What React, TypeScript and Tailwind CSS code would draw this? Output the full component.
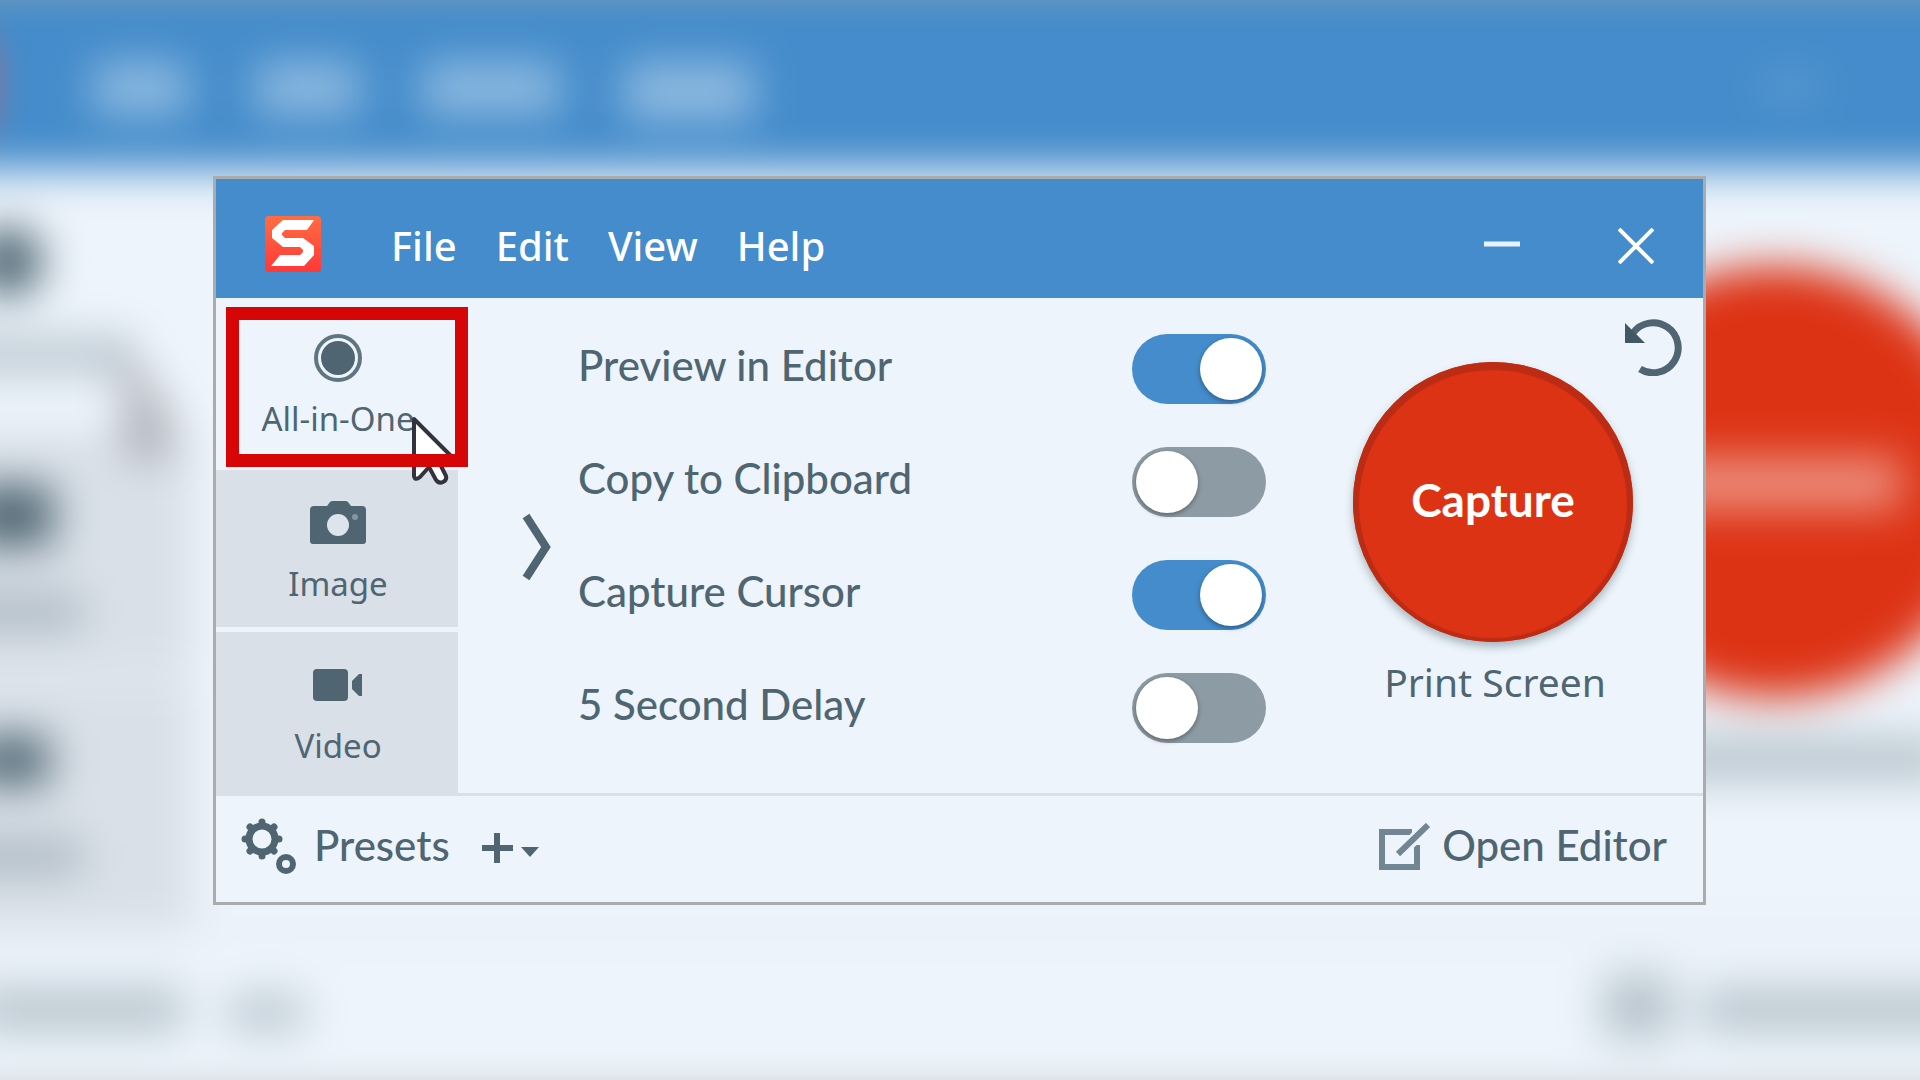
import { ReactNode, useState } from "react";

type Mode = "all" | "image" | "video";

const menus = ["File", "Edit", "View", "Help"];

const defaultOptions = [
  { id: "preview", label: "Preview in Editor", on: true },
  { id: "clipboard", label: "Copy to Clipboard", on: false },
  { id: "cursor", label: "Capture Cursor", on: true },
  { id: "delay", label: "5 Second Delay", on: false },
];

// Out of focus, enlarged copy of the capture window
function Backdrop() {
  return (
    <svg
      aria-hidden="true"
      className="absolute inset-0 h-full w-full"
      viewBox="332 187 1255 706"
      preserveAspectRatio="xMidYMid slice"
    >
      <defs>
        <filter
          id="soft"
          filterUnits="userSpaceOnUse"
          colorInterpolationFilters="sRGB"
          x="150"
          y="100"
          width="1620"
          height="880"
        >
          <feGaussianBlur stdDeviation="14" />
        </filter>
      </defs>
      <g filter="url(#soft)">
        <rect x="100" y="60" width="1720" height="960" fill="#edf4fb" />
        <rect x="100" y="160" width="1720" height="138" fill="#448ccb" />
        <rect x="100" y="60" width="1720" height="118" fill="#a9a9a9" />
        <rect x="100" y="904" width="1720" height="120" fill="#a4a6a8" />
        <rect x="265" y="214" width="55" height="56" fill="#ff5238" />
        <g fill="#ffffff" fillOpacity="0.4">
          <rect x="393" y="228" width="62" height="34" />
          <rect x="499" y="228" width="68" height="34" />
          <rect x="608" y="228" width="90" height="34" />
          <rect x="740" y="228" width="85" height="38" />
          <rect x="1485" y="241" width="35" height="6" />
        </g>
        <rect x="216" y="470" width="242" height="157" fill="#d9e0e8" />
        <rect x="216" y="632" width="242" height="164" fill="#d9e0e8" />
        <rect x="216" y="793" width="1490" height="3" fill="#d9e0e8" />
        <g fill="#4f6672">
          <circle cx="337" cy="358" r="23" />
          <rect x="311" y="504" width="56" height="40" />
          <rect x="314" y="668" width="50" height="32" />
        </g>
        <g fill="#4f6672" fillOpacity="0.34">
          <rect x="258" y="408" width="159" height="22" />
          <rect x="293" y="576" width="93" height="22" />
          <rect x="293" y="736" width="93" height="22" />
          <rect x="316" y="833" width="136" height="28" />
          <rect x="481" y="838" width="50" height="22" />
          <rect x="1386" y="669" width="219" height="28" />
          <rect x="1380" y="824" width="46" height="42" />
          <rect x="1444" y="833" width="222" height="28" />
        </g>
        <path d="M410 410l34 46-2 30h-28z" fill="#5a5560" fillOpacity="0.4" />
        <circle cx="1492" cy="502" r="141" fill="#dd3315" />
        <rect x="1411" y="486" width="164" height="34" fill="#ffffff" fillOpacity="0.45" />
      </g>
    </svg>
  );
}

function AppLogo() {
  return (
    <svg className="h-14 w-14" viewBox="0 0 56 56" aria-hidden="true">
      <defs>
        <linearGradient id="logo" x1="0" y1="0" x2="0" y2="1">
          <stop offset="0" stopColor="#ff6d42" />
          <stop offset="1" stopColor="#ff3838" />
        </linearGradient>
      </defs>
      <rect width="56" height="56" rx="4" fill="url(#logo)" />
      <path
        d="M49 4H18L7 14v8l11 9h17l3 3v2l-3 3H15L6 50h33l10-11v-9l-11-8H20l-3-3v-2l3-3h22z"
        fill="#fff"
      />
    </svg>
  );
}

function RecordIcon() {
  return (
    <svg className="h-[50px] w-[50px]" viewBox="0 0 50 50" aria-hidden="true">
      <circle cx="25" cy="25" r="22" fill="none" stroke="#5f7580" strokeWidth="4" />
      <circle cx="25" cy="25" r="17" fill="#4f6672" />
    </svg>
  );
}

function CameraIcon() {
  return (
    <svg className="h-[50px] w-14" viewBox="0 0 56 50" aria-hidden="true">
      <path
        d="M4 8h13l3-4q1-1 3-1h12q2 0 3 1l3 4h11q4 0 4 4v31q0 3-3 3H3q-3 0-3-3V12q0-4 4-4z"
        fill="#4f6672"
      />
      <circle cx="28" cy="27" r="11" fill="#dde4ec" />
      <circle cx="45" cy="19" r="3" fill="#8496a1" />
    </svg>
  );
}

function VideoIcon() {
  return (
    <svg className="h-[50px] w-[52px]" viewBox="0 0 52 50" aria-hidden="true">
      <rect x="1" y="9" width="35" height="32" rx="4" fill="#4f6672" />
      <path d="M50 14v22h-3l-7-7v-8l7-7z" fill="#4f6672" />
    </svg>
  );
}

function GearsIcon() {
  return (
    <svg className="h-[58px] w-[58px]" viewBox="0 0 58 58" aria-hidden="true">
      <g stroke="#4f6672" fill="none">
        <circle cx="22" cy="21" r="13" strokeWidth="7" />
        <path
          d="M22 6V4M22 38v-2M7 21H5M39 21h-2M11 10l-1-1M33 10l1-1M11 32l-1 1M33 32l1 1"
          strokeWidth="7"
          strokeLinecap="round"
        />
        <circle cx="46" cy="46" r="7" strokeWidth="6" />
      </g>
    </svg>
  );
}

function UndoIcon() {
  return (
    <svg className="h-[58px] w-[58px]" viewBox="0 0 58 58" aria-hidden="true">
      <path d="M8 15a25 25 0 1 1 7 36" fill="none" stroke="#4f6672" strokeWidth="7" />
      <path d="M0 5v20h20l-6-6z" fill="#405965" />
    </svg>
  );
}

function EditorIcon() {
  return (
    <svg className="h-12 w-[52px]" viewBox="0 0 52 48" aria-hidden="true">
      <path d="M34 9H4v35h35V22" fill="none" stroke="#718692" strokeWidth="6" />
      <path d="M21 31L49 3" stroke="#edf4fb" strokeWidth="12" />
      <path d="M20 31L50 2" stroke="#718692" strokeWidth="6" />
    </svg>
  );
}

function ModeTab({
  label,
  icon,
  active,
  onClick,
  className,
}: {
  label: string;
  icon: ReactNode;
  active: boolean;
  onClick: () => void;
  className: string;
}) {
  return (
    <button
      type="button"
      aria-pressed={active}
      onClick={onClick}
      className={`flex flex-col items-center gap-4 pl-0.5 font-['Noto_Sans',sans-serif] text-[33px] leading-10 ${
        active ? "bg-[#edf4fb]" : "bg-[#d9e0e8]"
      } ${className}`}
    >
      {icon}
      <span>{label}</span>
    </button>
  );
}

export default function App() {
  const [mode, setMode] = useState<Mode>("all");
  const [options, setOptions] = useState(defaultOptions);

  const toggle = (id: string) => {
    setOptions(options.map((o) => (o.id === id ? { ...o, on: !o.on } : o)));
  };

  return (
    <div className="relative flex min-h-screen items-center overflow-hidden bg-[#edf4fb] pr-[214px] pl-[213px] font-['Lato',sans-serif] text-[#4f6672]">
      <Backdrop />

      <main className="relative w-full border-3 border-[#a9abad] bg-[#edf4fb]">
        {/* Title bar */}
        <header className="flex h-[119px] items-center bg-[#448ccb] px-[49px] pt-3 text-white">
          <AppLogo />
          <nav className="ml-[70px] flex gap-[39px] pt-1 font-['Noto_Sans',sans-serif] text-[40px] leading-[48px] font-medium">
            {menus.map((menu) => (
              <button key={menu} type="button">
                {menu}
              </button>
            ))}
          </nav>
          <div className="ml-auto flex items-center gap-[98px] pt-1">
            <button type="button" aria-label="Minimize">
              <svg className="h-9 w-9" viewBox="0 0 36 36">
                <path d="M0 16h36" stroke="#eaf3fb" strokeWidth="5" />
              </svg>
            </button>
            <button type="button" aria-label="Close">
              <svg className="h-9 w-9" viewBox="0 0 36 36">
                <path d="M1 1l34 34M35 1L1 35" stroke="#fff" strokeWidth="4" />
              </svg>
            </button>
          </div>
        </header>

        <div className="flex">
          {/* Capture modes */}
          <div className="relative flex w-[242px] shrink-0 flex-col">
            <ModeTab
              label="All-in-One"
              icon={<RecordIcon />}
              active={mode === "all"}
              onClick={() => setMode("all")}
              className="h-[172px] pt-[35px]"
            />
            <ModeTab
              label="Image"
              icon={<CameraIcon />}
              active={mode === "image"}
              onClick={() => setMode("image")}
              className="mb-[5px] h-[157px] pt-7"
            />
            <ModeTab
              label="Video"
              icon={<VideoIcon />}
              active={mode === "video"}
              onClick={() => setMode("video")}
              className="h-[161px] pt-7"
            />

            {/* Pointer and highlight frame */}
            <svg
              className="pointer-events-none absolute top-[118px] left-[196px] h-[70px] w-[48px]"
              viewBox="0 0 48 70"
              aria-hidden="true"
            >
              <path
                d="M2 3v57q1 5 6 1l9-10 7 13q3 4 7 2t3-6l-7-14h18z"
                fill="#fff"
                stroke="#33333f"
                strokeWidth="4"
                strokeLinejoin="round"
              />
            </svg>
            <div className="pointer-events-none absolute top-[9px] left-[10px] h-[160px] w-[242px] border-13 border-[#d60606]" />
          </div>

          <button type="button" aria-label="Expand" className="ml-[64px] self-center pt-1">
            <svg className="h-[68px] w-[30px]" viewBox="0 0 30 68">
              <path d="M4 3l20 31L4 65" fill="none" stroke="#4f6672" strokeWidth="8" />
            </svg>
          </button>

          {/* Options */}
          <div className="ml-[26px] flex-1 pt-[15px]">
            {options.map((option) => (
              <label
                key={option.id}
                className="flex h-[113px] items-center justify-between text-[42px] leading-[48px] font-medium"
              >
                <span className="pb-2">{option.label}</span>
                <input
                  type="checkbox"
                  role="switch"
                  checked={option.on}
                  onChange={() => toggle(option.id)}
                  className="h-[70px] w-[134px] appearance-none rounded-full bg-[#8d9ba4] p-1 before:block before:h-[62px] before:w-[62px] before:rounded-full before:bg-white before:shadow-[0_2px_5px_rgba(0,0,0,0.35)] checked:bg-[#448ccb] checked:before:ml-auto"
                />
              </label>
            ))}
          </div>

          <div className="ml-[87px] flex w-[280px] flex-col items-center gap-4 pt-16">
            <button
              type="button"
              className="h-[280px] w-[280px] rounded-full bg-[#dd3315] pb-1 text-[46px] leading-[48px] font-bold text-white shadow-[inset_0_2px_1px_6px_#bc2c14,0_5px_8px_rgba(60,90,100,0.4)]"
            >
              Capture
            </button>
            <span className="pl-1 font-['Noto_Sans',sans-serif] text-[39px] leading-[48px]">
              Print Screen
            </span>
          </div>

          <button type="button" aria-label="Reset" className="mt-5 mr-5 -ml-2 self-start">
            <UndoIcon />
          </button>
        </div>

        {/* Footer */}
        <footer className="flex h-[109px] items-center border-t-3 border-[#d9e0e8] pr-9 pb-1 pl-6 text-[42px] leading-[48px] font-medium">
          <button type="button" className="flex items-center gap-4">
            <GearsIcon />
            <span className="pb-1">Presets</span>
          </button>
          <button type="button" aria-label="Add preset" className="ml-8">
            <svg className="h-8 w-[58px]" viewBox="0 0 58 32">
              <path d="M0 17h31M15 2v30" stroke="#4f6672" strokeWidth="6" />
              <path d="M39 16h18l-9 10z" fill="#4f6672" />
            </svg>
          </button>
          <a href="#editor" className="ml-auto flex items-center gap-3">
            <EditorIcon />
            <span className="pb-1">Open Editor</span>
          </a>
        </footer>
      </main>
    </div>
  );
}
